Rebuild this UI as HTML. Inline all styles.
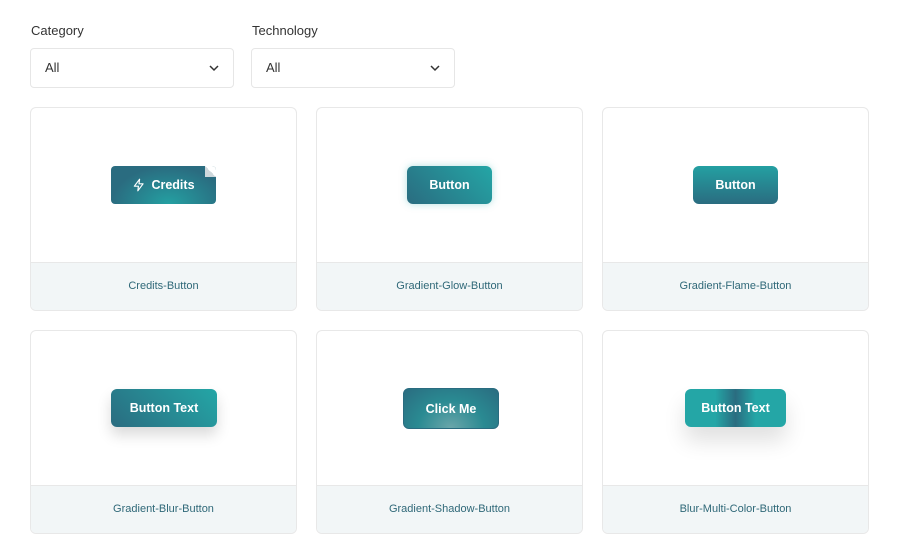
<!DOCTYPE html><html><head><style>
*{box-sizing:border-box;margin:0;padding:0}
body{width:903px;height:553px;background:#fff;font-family:"Liberation Sans",sans-serif;position:relative;overflow:hidden}
.lbl{position:absolute;top:23px;font-size:13px;color:#333}
.sel{position:absolute;top:48px;width:204px;height:40px;border:1px solid #e6e6e6;border-radius:4px;font-size:13px;color:#333;padding:11px 14px}
.sel svg{position:absolute;right:14px;top:15px}
.card{position:absolute;width:267px;height:204px;border:1px solid #e8e8e8;border-radius:6px;overflow:hidden}
.foot{position:absolute;left:0;right:0;bottom:0;height:48px;background:#f2f6f7;border-top:1px solid #e8e8e8;text-align:center;line-height:46px;font-size:11px;color:#2f6878}
.b{position:absolute;color:#fff;font-weight:bold;font-size:12.5px;display:flex;align-items:center;justify-content:center;border-radius:6px}
</style></head><body>
<div class="lbl" style="left:31px">Category</div>
<div class="lbl" style="left:252px">Technology</div>
<div class="sel" style="left:30px">All<svg width="10" height="8"><path d="M1 2l4 4 4-4" stroke="#333" stroke-width="1.5" fill="none"/></svg></div>
<div class="sel" style="left:251px">All<svg width="10" height="8"><path d="M1 2l4 4 4-4" stroke="#333" stroke-width="1.5" fill="none"/></svg></div>

<div class="card" style="left:30px;top:107px"><div class="b" style="left:80px;top:58px;width:105px;height:38px;background:radial-gradient(ellipse at 55% 100%,#24a0a2,#2a6c80 70%);border-radius:4px"><svg width="14" height="14" viewBox="0 0 24 24" style="margin-right:5px"><path d="M13 2L4 14h7l-1 8 9-12h-7z" stroke="#fff" stroke-width="2" fill="none" stroke-linejoin="round"/></svg>Credits<div style="position:absolute;right:0;top:0;width:11px;height:11px;background:linear-gradient(45deg,#cfd8dc 50%,#fff 50%);border-radius:0 4px 0 0"></div></div><div class="foot">Credits-Button</div></div>
<div class="card" style="left:316px;top:107px"><div class="b" style="left:90px;top:58px;width:85px;height:38px;background:linear-gradient(45deg,#2a6c80,#24a6a6);box-shadow:0 0 8px rgba(36,166,166,.35)">Button</div><div class="foot">Gradient-Glow-Button</div></div>
<div class="card" style="left:602px;top:107px"><div class="b" style="left:90px;top:58px;width:85px;height:38px;background:linear-gradient(180deg,#24a0a2,#2a6c80)">Button</div><div class="foot">Gradient-Flame-Button</div></div>

<div class="card" style="left:30px;top:330px"><div class="b" style="left:80px;top:58px;width:106px;height:38px;background:linear-gradient(45deg,#2a6c80,#24a6a6);box-shadow:0 8px 14px rgba(0,0,0,.15)">Button Text</div><div class="foot">Gradient-Blur-Button</div></div>
<div class="card" style="left:316px;top:330px"><div class="b" style="left:86px;top:57px;width:96px;height:41px;background:radial-gradient(ellipse at 50% 100%,#6aa6aa,#2a8a92 50%,#2a6c80);border:1px solid #2a6c80">Click Me</div><div class="foot">Gradient-Shadow-Button</div></div>
<div class="card" style="left:602px;top:330px"><div class="b" style="left:82px;top:58px;width:101px;height:38px;background:linear-gradient(90deg,#24a6a6 30%,#2a6c80 50%,#24a6a6 70%);box-shadow:0 14px 22px rgba(0,0,0,.12)">Button Text</div><div class="foot">Blur-Multi-Color-Button</div></div>
</body></html>
